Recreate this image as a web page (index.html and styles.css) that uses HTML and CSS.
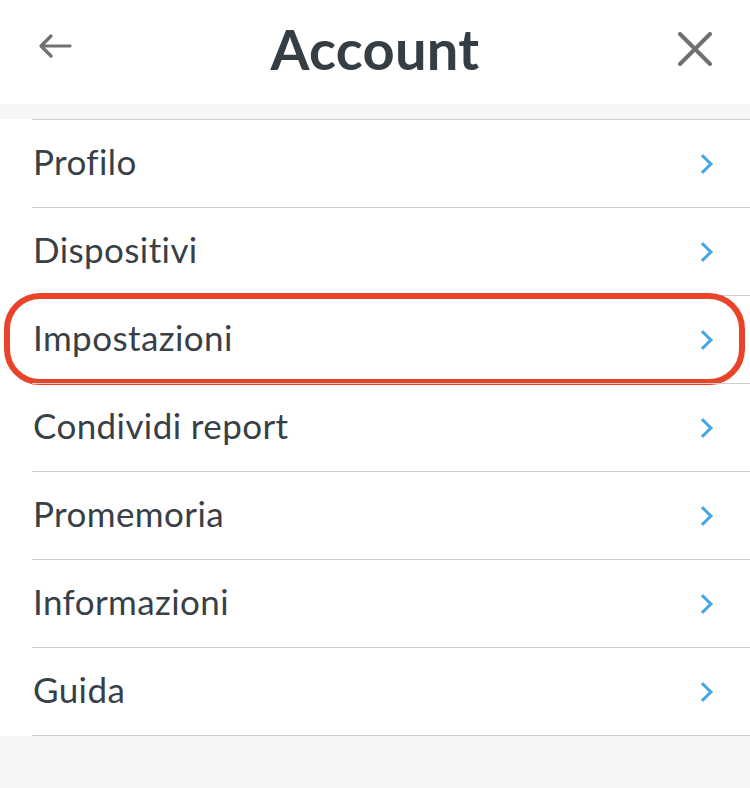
FILE: index.html
```
<!DOCTYPE html>
<html lang="it">
<head>
    <meta charset="UTF-8">
    <meta name="viewport" content="width=device-width, initial-scale=1.0">
    <title>Account</title>
    <link rel="stylesheet" href="styles.css">
</head>
<body>
    <header class="topbar">
        <button class="icon-btn back" aria-label="Indietro">
            <svg width="34" height="26" viewBox="0 0 34 26">
                <path d="M32 13H4M13 3L3 13l10 10" fill="none" stroke="#707070" stroke-width="3.2" stroke-linecap="round" stroke-linejoin="round"/>
            </svg>
        </button>
        <h1 class="title">Account</h1>
        <button class="icon-btn close" aria-label="Chiudi">
            <svg width="34" height="34" viewBox="0 0 34 34">
                <path d="M2 2l30 30M32 2L2 32" fill="none" stroke="#707070" stroke-width="4" stroke-linecap="round"/>
            </svg>
        </button>
    </header>

    <div class="band"></div>

    <ul class="menu">
        <li class="menu-item"><span>Profilo</span><i class="chev"></i></li>
        <li class="menu-item"><span>Dispositivi</span><i class="chev"></i></li>
        <li class="menu-item highlighted"><span>Impostazioni</span><i class="chev"></i></li>
        <li class="menu-item"><span>Condividi report</span><i class="chev"></i></li>
        <li class="menu-item"><span>Promemoria</span><i class="chev"></i></li>
        <li class="menu-item"><span>Informazioni</span><i class="chev"></i></li>
        <li class="menu-item"><span>Guida</span><i class="chev"></i></li>
    </ul>
</body>
</html>
```

FILE: styles.css
```
body {
    margin: 0;
    font-family: Lato, "Open Sans", sans-serif;
    background: #f5f6f8;
    color: #383f47;
    min-height: 100vh;
}

.topbar {
    height: 104px;
    background: white;
    display: flex;
    align-items: center;
    justify-content: space-between;
    padding: 0 38px 0 38px;
    box-sizing: border-box;
}

.icon-btn {
    background: none;
    border: 0;
    padding: 0;
    display: flex;
    align-items: center;
}

.back {
    margin-top: -12px;
}

.close {
    margin-top: -6px;
}

.title {
    margin: 0 0 8px 0;
    font-size: 56px;
    font-weight: bold;
    color: #353d45;
    letter-spacing: 0.3px;
}

.band {
    height: 15px;
}

.menu {
    list-style: none;
    margin: 0;
    padding: 0 0 0 32px;
    background: white;
}

.menu-item {
    position: relative;
    height: 87px;
    border-top: 1px solid #cfcfd2;
    display: flex;
    align-items: center;
    justify-content: space-between;
    padding: 0 40px 0 1px;
    font-size: 35px;
    letter-spacing: 0.4px;
}

.menu-item span {
    margin-bottom: 5px;
}

.menu-item:last-child {
    border-bottom: 1px solid #cfcfd2;
}

.chev {
    width: 11px;
    height: 11px;
    border-right: 3px solid #45a6e6;
    border-top: 3px solid #45a6e6;
    transform: rotate(45deg);
    margin-top: 1px;
}

.highlighted::after {
    content: "";
    position: absolute;
    left: -28px;
    right: 5px;
    top: -3px;
    bottom: -2px;
    border: 6px solid #e9432a;
    border-radius: 36px;
}
```
